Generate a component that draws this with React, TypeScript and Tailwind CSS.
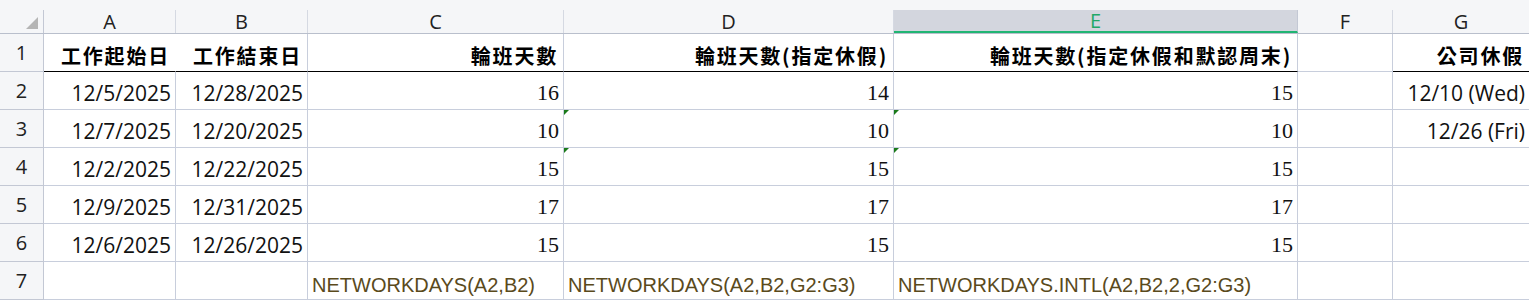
import React from "react";

const cols = ["A", "B", "C", "D", "E", "F", "G"];
const widths = ["w-[132px]", "w-[132px]", "w-[256px]", "w-[330px]", "w-[404px]", "w-[95px]", "w-[137px]"];

const cjk = { fontFamily: '"Noto Sans CJK TC", "Noto Sans CJK SC", sans-serif' };
const sans = { fontFamily: '"Open Sans", "Noto Sans", sans-serif' };
const serif = { fontFamily: '"Liberation Serif", serif' };
const arial = { fontFamily: '"Liberation Sans", Arial, sans-serif' };

type Cell = { t: string; kind?: "hdr" | "date" | "num" | "f" | "g" };

const rows: Cell[][] = [
  [
    { t: "工作起始日", kind: "hdr" },
    { t: "工作結束日", kind: "hdr" },
    { t: "輪班天數", kind: "hdr" },
    { t: "輪班天數(指定休假)", kind: "hdr" },
    { t: "輪班天數(指定休假和默認周末)", kind: "hdr" },
    { t: "" },
    { t: "公司休假", kind: "hdr" },
  ],
  [
    { t: "12/5/2025", kind: "date" },
    { t: "12/28/2025", kind: "date" },
    { t: "16", kind: "num" },
    { t: "14", kind: "num" },
    { t: "15", kind: "num" },
    { t: "" },
    { t: "12/10 (Wed)", kind: "date" },
  ],
  [
    { t: "12/7/2025", kind: "date" },
    { t: "12/20/2025", kind: "date" },
    { t: "10", kind: "num" },
    { t: "10", kind: "num" },
    { t: "10", kind: "num" },
    { t: "" },
    { t: "12/26 (Fri)", kind: "date" },
  ],
  [
    { t: "12/2/2025", kind: "date" },
    { t: "12/22/2025", kind: "date" },
    { t: "15", kind: "num" },
    { t: "15", kind: "num" },
    { t: "15", kind: "num" },
    { t: "" },
    { t: "" },
  ],
  [
    { t: "12/9/2025", kind: "date" },
    { t: "12/31/2025", kind: "date" },
    { t: "17", kind: "num" },
    { t: "17", kind: "num" },
    { t: "17", kind: "num" },
    { t: "" },
    { t: "" },
  ],
  [
    { t: "12/6/2025", kind: "date" },
    { t: "12/26/2025", kind: "date" },
    { t: "15", kind: "num" },
    { t: "15", kind: "num" },
    { t: "15", kind: "num" },
    { t: "" },
    { t: "" },
  ],
  [
    { t: "" },
    { t: "" },
    { t: "NETWORKDAYS(A2,B2)", kind: "f" },
    { t: "NETWORKDAYS(A2,B2,G2:G3)", kind: "f" },
    { t: "NETWORKDAYS.INTL(A2,B2,2,G2:G3)", kind: "f" },
    { t: "" },
    { t: "" },
  ],
];

function CellContent({ c }: { c: Cell }) {
  if (!c.t) return null;
  if (c.kind === "hdr")
    return (
      <span className="text-[20px] font-bold text-black tracking-[1.8px] leading-none pb-[5px] pr-[1px]" style={cjk}>
        {c.t}
      </span>
    );
  if (c.kind === "date")
    return (
      <span className="text-[21px] text-[#111] leading-none pb-[5px]" style={sans}>
        {c.t}
      </span>
    );
  if (c.kind === "num")
    return (
      <span className="text-[22px] text-[#111] leading-none pb-[5px]" style={serif}>
        {c.t}
      </span>
    );
  return (
    <span className="text-[20px] text-[#5a4a1c] leading-none pb-[4px]" style={arial}>
      {c.t}
    </span>
  );
}

export default function App() {
  return (
    <div className="w-[1529px] h-[302px] overflow-hidden bg-white">
      <div className="flex w-[1530px] bg-[#f5f6f8] h-[34px] border-b border-[#b9bfcc]">
        <div className="w-[44px] h-full shrink-0 pt-[10px]">
          <div className="h-full border-r border-[#c3c8d4] relative">
            <div className="absolute left-[26px] top-[7px] w-0 h-0 border-l-[12px] border-l-transparent border-b-[12px] border-b-[#b5b5b5]" />
          </div>
        </div>
        {cols.map((c, i) => (
          <div key={c} className={`${widths[i]} h-full shrink-0 pt-[10px]`}>
            {c === "E" ? (
              <div className="h-full bg-[#d3d6de] border-r border-[#c3c8d4] border-b-2 border-b-[#21b573] flex items-center justify-center">
                <span className="text-[20px] text-[#21a867] leading-none" style={sans}>
                  {c}
                </span>
              </div>
            ) : (
              <div className="h-full border-r border-[#d5d9e2] flex items-center justify-center">
                <span className="text-[20px] text-[#222] leading-none" style={sans}>
                  {c}
                </span>
              </div>
            )}
          </div>
        ))}
      </div>
      {rows.map((r, ri) => (
        <div key={ri} className="flex w-[1530px] h-[38px]">
          <div className="w-[44px] h-full shrink-0 bg-[#f5f6f8] border-r border-b border-[#c3c8d4] flex items-center justify-center">
            <span className="text-[20px] font-medium text-[#222] leading-none" style={sans}>
              {ri + 1}
            </span>
          </div>
          {r.map((c, ci) => {
            const blackBottom = ri === 0 && ci !== 5;
            const hideRight = ri === 0 && ci === 0;
            const tri = (ri === 2 || ri === 3) && (ci === 3 || ci === 4);
            return (
              <div
                key={ci}
                className={`${widths[ci]} h-full shrink-0 relative flex items-end border-r border-b ${
                  blackBottom ? "border-b-black" : "border-b-[#c8cedc]"
                } ${hideRight ? "border-r-white" : "border-r-[#c8cedc]"} ${
                  c.kind === "f" ? "justify-start pl-[4px]" : "justify-end pr-[4px]"
                }`}
              >
                {tri && (
                  <div className="absolute left-0 top-0 w-0 h-0 border-t-[5px] border-t-[#1a7a1a] border-r-[5px] border-r-transparent" />
                )}
                <CellContent c={c} />
              </div>
            );
          })}
        </div>
      ))}
    </div>
  );
}
